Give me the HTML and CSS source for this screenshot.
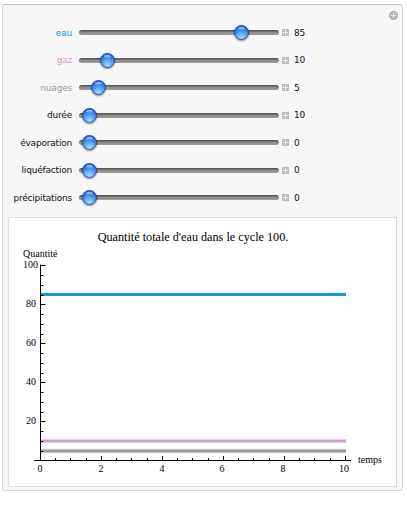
FILE: index.html
```html
<!DOCTYPE html>
<html lang="fr">
<head>
    <meta charset="UTF-8">
    <meta name="viewport" content="width=device-width, initial-scale=1.0">
    <title>Cycle de l'eau</title>
    <link rel="stylesheet" href="styles.css">
</head>
<body>
    <div class="panel">
        <span class="panel-toggle"></span>

        <div class="row">
            <span class="label label-eau">eau</span>
            <div class="track"><span class="thumb" style="left:162px"></span></div>
            <span class="plus"></span>
            <span class="value">85</span>
        </div>
        <div class="row">
            <span class="label label-gaz">gaz</span>
            <div class="track"><span class="thumb" style="left:28px"></span></div>
            <span class="plus"></span>
            <span class="value">10</span>
        </div>
        <div class="row">
            <span class="label label-nuages">nuages</span>
            <div class="track"><span class="thumb" style="left:19px"></span></div>
            <span class="plus"></span>
            <span class="value">5</span>
        </div>
        <div class="row">
            <span class="label">durée</span>
            <div class="track"><span class="thumb" style="left:10px"></span></div>
            <span class="plus"></span>
            <span class="value">10</span>
        </div>
        <div class="row">
            <span class="label">évaporation</span>
            <div class="track"><span class="thumb" style="left:10px"></span></div>
            <span class="plus"></span>
            <span class="value">0</span>
        </div>
        <div class="row">
            <span class="label">liquéfaction</span>
            <div class="track"><span class="thumb" style="left:10px"></span></div>
            <span class="plus"></span>
            <span class="value">0</span>
        </div>
        <div class="row">
            <span class="label">précipitations</span>
            <div class="track"><span class="thumb" style="left:10px"></span></div>
            <span class="plus"></span>
            <span class="value">0</span>
        </div>

        <div class="plot">
            <!-- viewBox is in page pixels: y = 460 - 1.95 * value, x = 40.5 + 30.5 * t -->
            <svg class="chart" width="387" height="268" viewBox="9 218 387 268">
                <text class="chart-title" x="193" y="241" text-anchor="middle">Quantité totale d'eau dans le cycle 100.</text>
                <text x="23" y="257">Quantité</text>
                <text x="23" y="268">100</text>

                <line class="series-halo" x1="40" x2="346" y1="451" y2="451"/>
                <line class="series" x1="40" x2="346" y1="294.5" y2="294.5" stroke="#169dd0"/>
                <line class="series" x1="40" x2="346" y1="441" y2="441" stroke="#cf9ed2"/>
                <line class="series" x1="40" x2="346" y1="451" y2="451" stroke="#999999"/>

                <path class="axis" d="M34 460.5H351M40.5 264.5V460.5"/>
                <path class="axis" d="M40.5 265.5h5M40.5 304.5h5M40.5 343.5h5M40.5 382.5h5M40.5 421.5h5
                    M101.5 460v-4M162.5 460v-4M223.5 460v-4M284.5 460v-4M345.5 460v-4"/>
                <path class="axis" d="M40.5 275.5h3M40.5 285.5h3M40.5 295.5h3M40.5 314.5h3M40.5 324.5h3M40.5 334.5h3
                    M40.5 353.5h3M40.5 363.5h3M40.5 373.5h3M40.5 392.5h3M40.5 402.5h3M40.5 412.5h3
                    M40.5 431.5h3M40.5 441.5h3M40.5 451.5h3
                    M55.5 460v-2M70.5 460v-2M86.5 460v-2M116.5 460v-2M131.5 460v-2M147.5 460v-2
                    M177.5 460v-2M192.5 460v-2M208.5 460v-2M238.5 460v-2M253.5 460v-2M269.5 460v-2
                    M299.5 460v-2M314.5 460v-2M330.5 460v-2"/>

                <text x="36" y="307" text-anchor="end">80</text>
                <text x="36" y="346" text-anchor="end">60</text>
                <text x="36" y="385" text-anchor="end">40</text>
                <text x="36" y="424" text-anchor="end">20</text>

                <text x="40" y="472" text-anchor="middle">0</text>
                <text x="101" y="472" text-anchor="middle">2</text>
                <text x="162" y="472" text-anchor="middle">4</text>
                <text x="222" y="472" text-anchor="middle">6</text>
                <text x="283" y="472" text-anchor="middle">8</text>
                <text x="344" y="472" text-anchor="middle">10</text>
                <text x="358" y="463">temps</text>
            </svg>
        </div>
    </div>
</body>
</html>
```

FILE: styles.css
```css
body {
    margin: 0;
    background-color: #fff;
    font-family: 'DejaVu Sans', Arial, sans-serif;
    color: #000;
}

.panel {
    position: relative;
    width: 399px;
    height: 471px;
    margin: 4px 0 0 2px;
    padding-top: 14px;
    background-color: #f7f7f7;
    border: 1px solid #d8d8d8;
    border-top-color: #bdbdbd;
    border-radius: 3px;
}

.panel-toggle {
    position: absolute;
    top: 6px;
    right: 4px;
    width: 9px;
    height: 9px;
    border-radius: 50%;
    background:
        linear-gradient(#f7f7f7, #f7f7f7) center / 5px 1px no-repeat,
        linear-gradient(#f7f7f7, #f7f7f7) center / 1px 5px no-repeat,
        #b4b4b4;
}

.row {
    display: flex;
    align-items: center;
    height: 27.5px;
}

.label {
    width: 69px;
    margin-right: 7px;
    font-size: 9px;
    letter-spacing: -0.2px;
    text-align: right;
    color: #111;
}

.label-eau {
    color: #169dd0;
}

.label-gaz {
    color: #cf9ed2;
}

.label-nuages {
    color: #999;
}

.track {
    position: relative;
    width: 200px;
    height: 5px;
    background: linear-gradient(#5a5755 0, #5a5755 20%, #8c8987 40%, #a09d9b 100%);
    border-radius: 3px;
}

.thumb {
    position: absolute;
    top: -5px;
    width: 15px;
    height: 15px;
    margin-left: -7.5px;
    box-sizing: border-box;
    border: 1px solid #1a48a6;
    border-radius: 50%;
    background: radial-gradient(circle at 50% 90%, #a8dcff 0, #5aa6f4 40%, #1f62d8 80%);
    box-shadow: 0 1px 2px rgba(0, 0, 0, 0.45);
}

.thumb::after {
    content: "";
    position: absolute;
    top: 1px;
    left: 3px;
    width: 7px;
    height: 3px;
    border-radius: 50%;
    background: linear-gradient(rgba(255, 255, 255, 0.7), rgba(255, 255, 255, 0.1));
}

.plus {
    width: 7px;
    height: 7px;
    margin: 0 5px 0 3px;
    background:
        linear-gradient(#f7f7f7, #f7f7f7) center / 5px 1px no-repeat,
        linear-gradient(#f7f7f7, #f7f7f7) center / 1px 5px no-repeat,
        #bcbcbc;
}

.value {
    font-size: 9px;
    letter-spacing: -0.2px;
    color: #111;
}

.plot {
    width: 387px;
    height: 268px;
    margin: 5.5px 0 0 5px;
    background-color: #fff;
    border: 1px solid #ddd;
}

.chart {
    display: block;
    font-family: 'Liberation Serif', 'Times New Roman', serif;
    font-size: 10px;
}

.chart-title {
    font-size: 12.2px;
}

.series {
    stroke-width: 3;
}

.series-halo {
    stroke: #eee;
    stroke-width: 5;
}

.axis {
    fill: none;
    stroke: #000;
    stroke-width: 1;
}
```
